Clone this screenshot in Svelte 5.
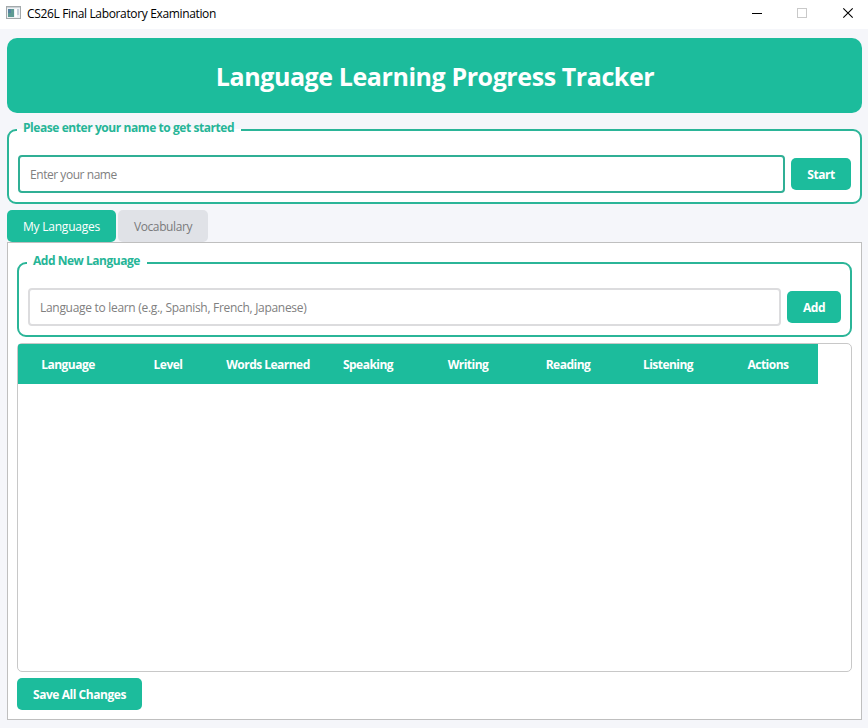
<script>
  const columns = [
    'Language',
    'Level',
    'Words Learned',
    'Speaking',
    'Writing',
    'Reading',
    'Listening',
    'Actions'
  ];
  const tabs = ['My Languages', 'Vocabulary'];
  let active = $state(0);
  let name = $state('');
  let language = $state('');
</script>

<div class="window">
  <div class="titlebar">
    <svg class="appicon" width="15" height="13" viewBox="0 0 15 13">
      <rect x="0.5" y="0.5" width="14" height="12" fill="#eef1f4" stroke="#a3a9ab" />
      <rect x="1" y="1" width="13" height="1" fill="#ccd3d8" />
      <rect x="2" y="3" width="6" height="8" fill="#5d9a93" />
      <rect x="2" y="3" width="3" height="4" fill="#5582a0" />
      <rect x="9" y="3" width="2" height="8" fill="#ffffff" />
      <rect x="11" y="3" width="2" height="6" fill="#c5cfdc" />
    </svg>
    <span class="caption">CS26L Final Laboratory Examination</span>
    <svg class="controls" width="104" height="12" viewBox="0 0 104 12" shape-rendering="crispEdges">
      <path d="M0 6.5H10" stroke="#000" fill="none" />
      <rect x="45.5" y="1.5" width="9" height="9" stroke="#c9c9c9" fill="none" />
      <path d="M91.3 1.3L100.7 10.7M100.7 1.3L91.3 10.7" stroke="#000" stroke-width="1.1" fill="none" shape-rendering="auto" />
    </svg>
  </div>

  <div class="content">
    <header><h1>Language Learning Progress Tracker</h1></header>

    <section class="group name-group">
      <span class="legend page">Please enter your name to get started</span>
      <input class="focused" placeholder="Enter your name" bind:value={name} />
      <button>Start</button>
    </section>

    <nav>
      {#each tabs as tab, i}
        <button class="tab tab{i}" class:active={active === i} onclick={() => (active = i)}>{tab}</button>
      {/each}
    </nav>

    <main>
      <section class="group">
        <span class="legend inner">Add New Language</span>
        <input placeholder="Language to learn (e.g., Spanish, French, Japanese)" bind:value={language} />
        <button class="add">Add</button>
      </section>
      <div class="table">
        <div class="thead">
          {#each columns as column}
            <span>{column}</span>
          {/each}
        </div>
      </div>
      <button class="save">Save All Changes</button>
    </main>
  </div>
</div>

<style>
  .window {
    box-sizing: border-box;
    width: 868px;
    height: 728px;
    display: flex;
    flex-direction: column;
    background: #f5f6fa;
    font-family: 'Open Sans', 'Noto Sans', sans-serif;
    font-size: 12px;
    line-height: 16px;
    overflow: hidden;
  }
  .window * {
    box-sizing: border-box;
  }
  .titlebar {
    height: 29px;
    display: flex;
    align-items: flex-start;
    padding: 6px 9px 0 6px;
    background: #fff;
    color: #000;
  }
  .appicon {
    margin-right: 6px;
  }
  .caption {
    flex: 1;
    letter-spacing: -0.35px;
  }
  .controls {
    margin: 1px 3px 0 0;
  }
  .content {
    flex: 1;
    display: flex;
    flex-direction: column;
    padding: 9px 6px 8px 7px;
  }
  header {
    height: 75px;
    flex: none;
    display: flex;
    align-items: center;
    justify-content: center;
    border-radius: 10px;
    background: #1cbc9c;
  }
  h1 {
    margin: 1px 0 0 1px;
    color: #fff;
    font-size: 25px;
    line-height: 34px;
    font-weight: 700;
    letter-spacing: -0.42px;
    white-space: nowrap;
  }
  .group {
    position: relative;
    height: 75px;
    flex: none;
    display: flex;
    align-items: flex-start;
    gap: 6px;
    padding: 24px 9px 0;
    border: 2px solid #2bb598;
    border-radius: 9px;
    background: #fff;
  }
  .name-group {
    margin-top: 16px;
  }
  .legend {
    position: absolute;
    left: 8px;
    top: -11px;
    height: 17px;
    padding: 0 0 0 6px;
    background: #fff;
    color: #26b597;
    font-weight: 700;
    white-space: nowrap;
  }
  .legend.page {
    width: 224px;
    letter-spacing: -0.43px;
    background: linear-gradient(#f5f6fa 9px, #fff 9px);
  }
  .legend.inner {
    width: 120px;
    letter-spacing: -0.48px;
  }
  input {
    flex: 1;
    min-width: 0;
    height: 38px;
    padding: 0 10px;
    border: 2px solid #dcdcde;
    border-radius: 4px;
    outline: none;
    background: #fff;
    color: #333;
    font: inherit;
    letter-spacing: -0.3px;
  }
  input.focused {
    border-color: #30af95;
    letter-spacing: -0.45px;
  }
  input::placeholder {
    color: #808080;
    opacity: 1;
  }
  button {
    height: 32px;
    padding: 1px 0 0;
    border: 0;
    border-radius: 5px;
    background: #1cbc9c;
    color: #fff;
    font: inherit;
    font-weight: 700;
    letter-spacing: -0.45px;
    white-space: nowrap;
  }
  .group button {
    width: 60px;
    margin-top: 3px;
  }
  .group .add {
    width: 54px;
  }
  nav {
    display: flex;
    gap: 2px;
    margin-top: 6px;
  }
  .tab {
    width: 90px;
    background: #e0e2e7;
    color: #7a7a7c;
    font-weight: 400;
    letter-spacing: -0.4px;
  }
  .tab0 {
    width: 109px;
    letter-spacing: -0.22px;
  }
  .tab.active {
    background: #1cbc9c;
    color: #fff;
  }
  main {
    flex: 1;
    display: flex;
    flex-direction: column;
    padding: 19px 9px 9px;
    border: 1px solid #bfbfbf;
    background: #fff;
  }
  .table {
    flex: 1;
    margin: 6px 0;
    border: 1px solid #c8c8c8;
    border-radius: 5px;
  }
  .thead {
    display: flex;
    width: 800px;
    height: 40px;
    padding-top: 1px;
    align-items: center;
    border-top-left-radius: 2px;
    background: #1cbc9c;
    color: #fff;
    font-weight: 700;
    letter-spacing: -0.52px;
  }
  .thead span {
    width: 100px;
    text-align: center;
  }
  .save {
    width: 125px;
  }
</style>
